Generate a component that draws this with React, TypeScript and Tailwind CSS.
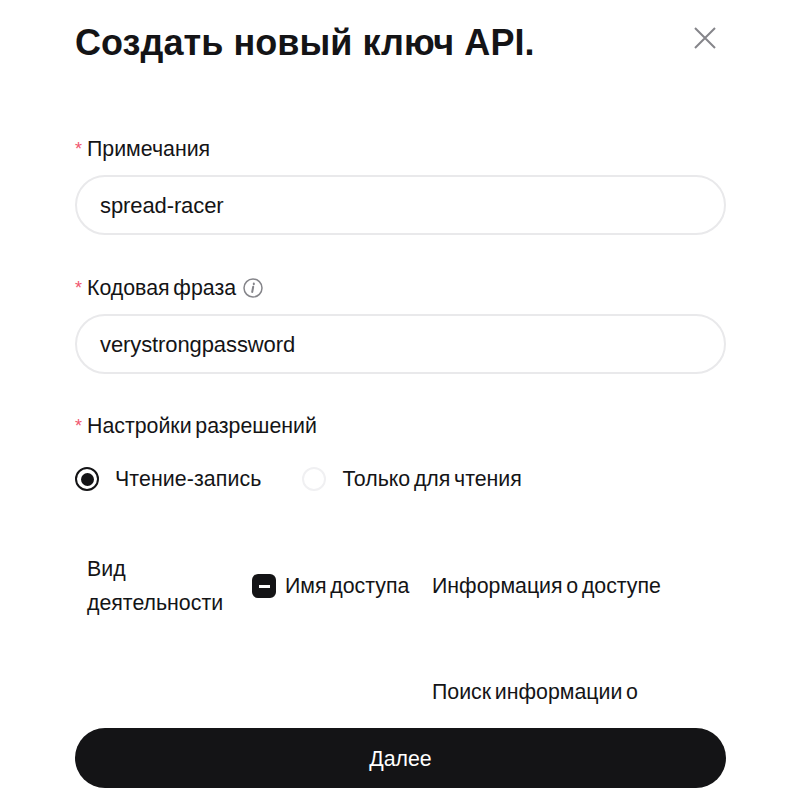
import React from "react";

function Label({ children }: { children: React.ReactNode }) {
  return (
    <div className="flex items-center h-[24px] pt-[2px] text-[21.33px] [word-spacing:-2.2px] leading-[24px] text-[#141416]">
      <span className="w-[12px] text-[18px] text-[#f0566f]">*</span>
      {children}
    </div>
  );
}

function Field({ value }: { value: string }) {
  return (
    <div className="flex items-center mt-[15px] h-[60px] rounded-[30px] border-2 border-[#e9e9eb] pl-[23px] text-[22px] tracking-[-0.1px] text-[#141416]">
      {value}
    </div>
  );
}

export default function App() {
  return (
    <div className="h-[800px] w-[800px] overflow-hidden bg-white pl-[75px] pr-[74px] font-['Liberation_Sans',Arial,sans-serif] text-[#141416]">
      <div className="flex justify-between pt-[20px] h-[136px]">
        <h1 className="text-[36px] leading-[46px] font-bold tracking-[0.05px] whitespace-nowrap">Создать новый ключ API.</h1>
        <svg className="mt-[7px] mr-[10px]" width="22" height="22" viewBox="0 0 22 22" fill="none" stroke="#85858a" strokeWidth="2">
          <path d="M1 1 L21 21 M21 1 L1 21" />
        </svg>
      </div>
      <Label>Примечания</Label>
      <Field value="spread-racer" />
      <div className="mt-[40px]">
        <Label>
          Кодовая фраза
          <svg className="ml-[6px]" width="22" height="22" viewBox="0 0 22 22" fill="none">
            <circle cx="11" cy="11" r="9" stroke="#85858a" strokeWidth="1.5" />
            <path d="M11.8 6.4v.9M11.2 9.8l-1 5.2" stroke="#85858a" strokeWidth="2" strokeLinecap="round" />
          </svg>
        </Label>
      </div>
      <Field value="verystrongpassword" />
      <div className="mt-[39px]">
        <Label>Настройки разрешений</Label>
      </div>
      <div className="flex items-center mt-[30px] h-[24px] text-[21.33px] [word-spacing:-2.2px] whitespace-nowrap">
        <span className="flex items-center justify-center w-[24px] h-[24px] rounded-full border-2 border-[#141416]">
          <span className="w-[13px] h-[13px] rounded-full bg-[#141416]" />
        </span>
        <span className="ml-[16px] pt-[2px] tracking-[0.1px]">Чтение-запись</span>
        <span className="ml-[41px] w-[24px] h-[24px] rounded-full border-2 border-[#f0f0f2]" />
        <span className="ml-[16px] pt-[2px]">Только для чтения</span>
      </div>
      <div className="flex mt-[60px] h-[70px] text-[21.33px] [word-spacing:-2.2px] leading-[34px] whitespace-nowrap">
        <div className="w-[165px] pl-[12px] pt-[1px] whitespace-normal">Вид деятельности</div>
        <div className="flex items-center w-[180px] pl-[12px]">
          <span className="flex items-center justify-center w-[24px] h-[24px] rounded-[6px] bg-[#141416]">
            <span className="w-[11px] h-[3px] bg-white" />
          </span>
          <span className="ml-[9px]">Имя доступа</span>
        </div>
        <div className="flex items-center pl-[12px]">Информация о доступе</div>
      </div>
      <div className="mt-[53px] ml-[357px] h-[34px] pt-[1px] leading-[34px] text-[21.33px] [word-spacing:-2.2px] whitespace-nowrap">Поиск информации о</div>
      <button className="block mt-[20px] w-full h-[60px] pt-[3px] rounded-[30px] bg-[#141416] text-white text-[21.33px]">Далее</button>
    </div>
  );
}
